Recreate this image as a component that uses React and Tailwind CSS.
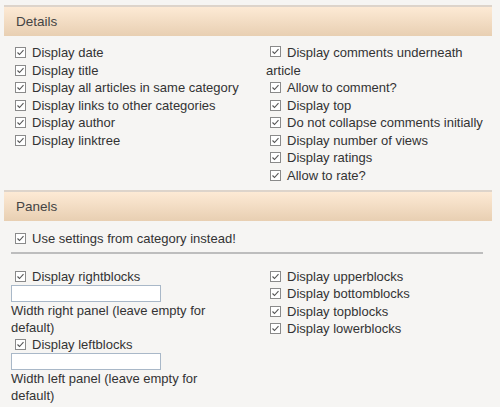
import React from 'react';

const Check = () => (
  <svg width="11" height="11" viewBox="0 0 11 11" className="shrink-0 mx-[4px] mr-[6px]">
    <rect x="0.5" y="0.5" width="10" height="10" fill="#fff" stroke="#8a8a8a" />
    <path d="M2.5 5.5 L4.5 7.5 L8.5 3.2" fill="none" stroke="#555" strokeWidth="1.1" />
  </svg>
);

const Row = ({ label, h = 'h-[17.5px]' }) => (
  <div className={`flex items-center ${h}`}>
    <Check />
    <span>{label}</span>
  </div>
);

const Header = ({ title }) => (
  <div className="mx-[4px] mr-[8px] h-[31px] border-t-2 border-[#ddd4cb] bg-gradient-to-b from-[#fdead5] to-[#e8cfb2] flex items-center pl-[12px] text-[13.5px] text-[#444]">
    {title}
  </div>
);

const App = () => {
  return (
    <div
      className="w-[500px] h-[407px] bg-[#f6f5f3] text-[#333] text-[13px] leading-[17.5px] pt-[5px] overflow-hidden"
      style={{ fontFamily: '"Liberation Sans", Arial, sans-serif' }}
    >
      <Header title="Details" />
      <div className="grid grid-cols-[255px_1fr] pl-[11px] pt-[8px]">
        <div>
          <Row label="Display date" />
          <Row label="Display title" />
          <Row label="Display all articles in same category" />
          <Row label="Display links to other categories" />
          <Row label="Display author" />
          <Row label="Display linktree" />
        </div>
        <div>
          <div>
            <span className="inline-flex items-center"><Check /></span>
            Display comments underneath article
          </div>
          <Row label="Allow to comment?" />
          <Row label="Display top" />
          <Row label="Do not collapse comments initially" />
          <Row label="Display number of views" />
          <Row label="Display ratings" />
          <Row label="Allow to rate?" />
        </div>
      </div>

      <div className="mt-[6px]">
        <Header title="Panels" />
      </div>
      <div className="pl-[11px] pt-[9px]">
        <Row label="Use settings from category instead!" />
        <hr className="mt-[4px] mr-[17px] border-t-2 border-[#bdbdbd]" />
      </div>

      <div className="grid grid-cols-[255px_1fr] pl-[11px] pt-[14px] leading-[17px]">
        <div>
          <Row label="Display rightblocks" h="h-[17px]" />
          <input className="block w-[150px] h-[17px] bg-white border border-[#a9b8c8]" />
          <div className="w-[220px]">Width right panel (leave empty for default)</div>
          <Row label="Display leftblocks" h="h-[17px]" />
          <input className="block w-[150px] h-[17px] bg-white border border-[#a9b8c8]" />
          <div className="w-[220px]">Width left panel (leave empty for default)</div>
        </div>
        <div>
          <Row label="Display upperblocks" />
          <Row label="Display bottomblocks" />
          <Row label="Display topblocks" />
          <Row label="Display lowerblocks" />
        </div>
      </div>
    </div>
  );
};

export default App;
